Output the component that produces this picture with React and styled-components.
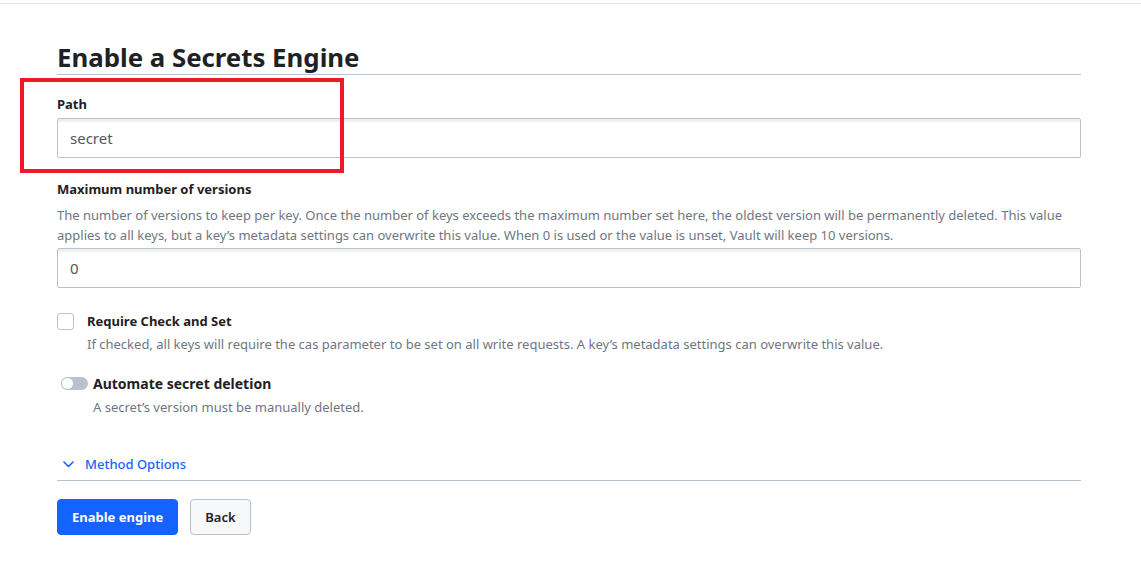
import React from 'react';
import styled, { createGlobalStyle } from 'styled-components';

const GlobalStyle = createGlobalStyle`
  html, body {
    margin: 0;
    padding: 0;
    background: #ffffff;
    font-family: "Noto Sans", "Open Sans", sans-serif;
    color: #1f2124;
  }
`;

const TopBar = styled.div`
  height: 3px;
  border-bottom: 1px solid #e3e4e6;
`;

const Page = styled.div`
  position: relative;
  padding: 38px 60px 40px 57px;
`;

const Title = styled.h1`
  margin: 0;
  padding-bottom: 2px;
  font-size: 25.8px;
  line-height: 30px;
  font-weight: 700;
  color: #1f2124;
  border-bottom: 1px solid #bac1cc;
`;

const Field = styled.div`
  margin-top: ${(p) => p.$top || 0}px;
`;

const Label = styled.label`
  display: block;
  font-size: 13px;
  line-height: 18px;
  font-weight: 700;
  color: #1f2124;
`;

const Help = styled.p`
  margin: 7px 0 0;
  font-size: 13px;
  line-height: 20px;
  color: #6f7682;
`;

const TextInput = styled.input`
  display: block;
  box-sizing: border-box;
  width: 100%;
  height: 40px;
  margin-top: ${(p) => p.$top || 0}px;
  padding: 0 12px;
  border: 1px solid #bac1cc;
  border-radius: 2px;
  box-shadow: inset 0 4px 1px -1px rgba(0, 0, 0, 0.06);
  font-family: inherit;
  font-size: 15px;
  color: #525761;
  outline: none;
`;

const CheckRow = styled.div`
  display: grid;
  grid-template-columns: ${(p) => p.$col}px 1fr;
  align-items: center;
  margin-top: ${(p) => p.$top}px;
`;

const Box = styled.span`
  box-sizing: border-box;
  width: 17px;
  height: 17px;
  border: 1px solid #bac1cc;
  border-radius: 3px;
  background: #fff;
`;

const Toggle = styled.span`
  position: relative;
  box-sizing: border-box;
  margin-left: 4px;
  width: 27px;
  height: 13px;
  border-radius: 7px;
  background: #bac1cc;

  &:before {
    content: '';
    position: absolute;
    left: 0;
    top: 0;
    width: 13px;
    height: 13px;
    box-sizing: border-box;
    border-radius: 50%;
    background: #fff;
    border: 1px solid #bac1cc;
  }
`;

const RowLabel = styled.span`
  font-size: ${(p) => p.$size || 13}px;
  font-weight: 700;
  color: #1f2124;
`;

const SubHelp = styled(Help)`
  grid-column: 2;
  margin-top: 4px;
`;

const Disclosure = styled.div`
  display: flex;
  align-items: center;
  gap: 11px;
  margin-top: 38px;
  padding: 0 0 7px 6px;
  border-bottom: 1px solid #bac1cc;
  color: #1563ff;
  font-size: 13px;
  font-weight: 500;
`;

const Actions = styled.div`
  display: flex;
  gap: 12px;
  margin-top: 18px;
`;

const Button = styled.button`
  height: 36px;
  padding: 0 14px;
  border-radius: 4px;
  font-family: inherit;
  font-size: 13px;
  cursor: pointer;
  border: 1px solid ${(p) => (p.$primary ? '#1563ff' : '#bac1cc')};
  background: ${(p) => (p.$primary ? '#1563ff' : '#f7f8fa')};
  color: ${(p) => (p.$primary ? '#ffffff' : '#1f2124')};
  font-weight: ${(p) => (p.$primary ? 700 : 600)};
`;

const Highlight = styled.div`
  position: absolute;
  left: 20px;
  top: 74px;
  width: 316px;
  height: 87px;
  border: 4px solid #ed1c24;
  pointer-events: none;
`;

export default function App() {
  return (
    <>
      <GlobalStyle />
      <TopBar />
      <Page>
        <Title>Enable a Secrets Engine</Title>

        <Field $top={20}>
          <Label>Path</Label>
          <TextInput $top={5} defaultValue="secret" />
        </Field>

        <Field $top={22}>
          <Label>Maximum number of versions</Label>
          <Help>
            The number of versions to keep per key. Once the number of keys exceeds the maximum number set here, the
            oldest version will be permanently deleted. This value applies to all keys, but a key’s metadata settings
            can overwrite this value. When 0 is used or the value is unset, Vault will keep 10 versions.
          </Help>
          <TextInput $top={3} defaultValue="0" />
        </Field>

        <CheckRow $col={30} $top={24}>
          <Box />
          <RowLabel>Require Check and Set</RowLabel>
          <SubHelp>
            If checked, all keys will require the cas parameter to be set on all write requests. A key’s metadata
            settings can overwrite this value.
          </SubHelp>
        </CheckRow>

        <CheckRow $col={36} $top={20}>
          <Toggle />
          <RowLabel $size={14}>Automate secret deletion</RowLabel>
          <SubHelp>A secret’s version must be manually deleted.</SubHelp>
        </CheckRow>

        <Disclosure>
          <svg width="11" height="7" viewBox="0 0 11 7" fill="none">
            <path d="M1 1l4.5 4.5L10 1" stroke="#1563ff" strokeWidth="1.6" strokeLinecap="round" strokeLinejoin="round" />
          </svg>
          Method Options
        </Disclosure>

        <Actions>
          <Button $primary>Enable engine</Button>
          <Button>Back</Button>
        </Actions>

        <Highlight />
      </Page>
    </>
  );
}
